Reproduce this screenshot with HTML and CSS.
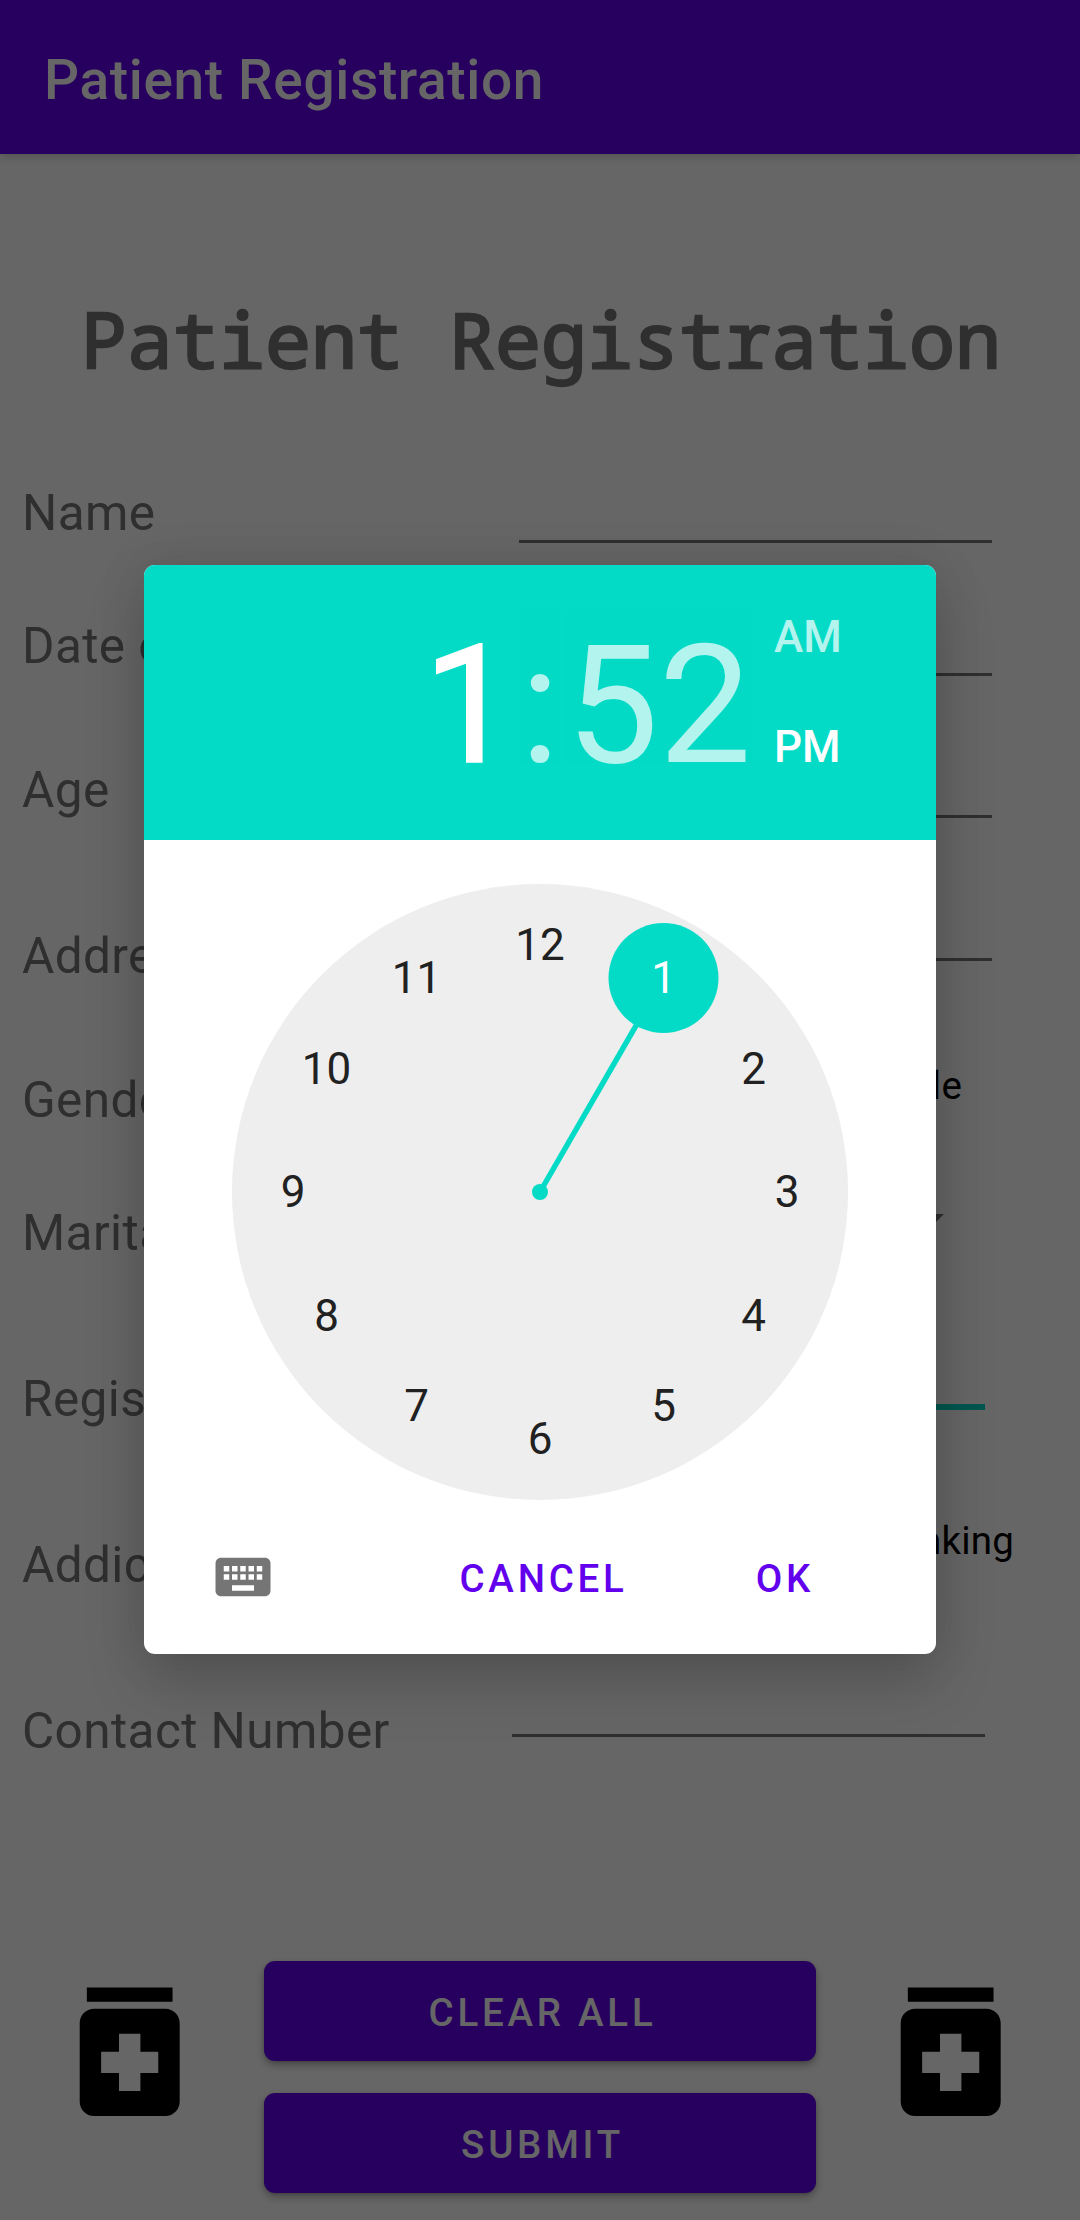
FILE: index.html
```html
<!DOCTYPE html>
<html lang="en">
<head>
<meta charset="utf-8">
<title>Patient Registration</title>
<link rel="stylesheet" href="styles.css">
</head>
<body>
<div class="screen">
  <header class="appbar">Patient Registration</header>
  <main class="content">
    <h1 class="heading">Patient Registration</h1>
    <form class="form">
      <div class="row row-name"><label>Name</label><span class="line"></span></div>
      <div class="row row-date"><label>Date of Birth</label><span class="line"></span></div>
      <div class="row row-age"><label>Age</label><span class="line"></span></div>
      <div class="row row-address"><label>Address</label><span class="line"></span></div>
      <div class="row row-gender"><label>Gender</label><span class="choice">Female</span></div>
      <div class="row row-marital"><label>Marital</label><span class="caret"></span></div>
      <div class="row row-time"><label>Registration</label><span class="line line-active"></span></div>
      <div class="row row-addiction"><label>Addiction</label><span class="choice">Drinking</span></div>
      <div class="row row-contact"><label>Contact Number</label><span class="line"></span></div>
    </form>
    <div class="actions">
      <svg class="medicine" viewBox="0 0 24 24"><path d="M6 3h12v2H6zM17 6H7c-1.100 0-2 .9-2 2v11c0 1.100.9 2 2 2h10c1.100 0 2-.9 2-2V8c0-1.100-.9-2-2-2zm-1 9h-2.500v2.500h-3V15H8v-3h2.500V9.500h3V12H16z"/></svg>
      <div class="buttons">
        <button class="button" type="button">CLEAR ALL</button>
        <button class="button" type="button">SUBMIT</button>
      </div>
      <svg class="medicine" viewBox="0 0 24 24"><path d="M6 3h12v2H6zM17 6H7c-1.100 0-2 .9-2 2v11c0 1.100.9 2 2 2h10c1.100 0 2-.9 2-2V8c0-1.100-.9-2-2-2zm-1 9h-2.500v2.500h-3V15H8v-3h2.500V9.500h3V12H16z"/></svg>
    </div>
  </main>
  <div class="scrim">
    <section class="dialog">
      <div class="time-header">
        <div class="time"><span class="hour">1</span><span class="colon">:</span><span class="minute">52</span></div>
        <div class="period"><span class="am">AM</span><span class="pm">PM</span></div>
      </div>
      <svg class="clock" viewBox="-308 -308 616 616">
        <circle class="face" r="308"/>
        <line class="hand" x1="0" y1="0" x2="123.500" y2="-214"/>
        <circle class="accent" r="8"/>
        <circle class="accent" cx="123.500" cy="-214" r="55"/>
        <g class="numbers">
          <text x="0" y="-232">12</text>
          <text class="selected" x="123.500" y="-199">1</text>
          <text x="213.500" y="-108">2</text>
          <text x="247" y="15">3</text>
          <text x="213.500" y="139">4</text>
          <text x="123.500" y="229">5</text>
          <text x="0" y="262">6</text>
          <text x="-123.500" y="229">7</text>
          <text x="-213.500" y="139">8</text>
          <text x="-247" y="15">9</text>
          <text x="-213.500" y="-108">10</text>
          <text x="-123.500" y="-199">11</text>
        </g>
      </svg>
      <div class="dialog-actions">
        <svg class="keyboard" viewBox="0 0 24 24"><path d="M20 5H4c-1.100 0-1.990.9-1.990 2L2 17c0 1.100.9 2 2 2h16c1.100 0 2-.9 2-2V7c0-1.100-.9-2-2-2zm-9 3h2v2h-2V8zm0 3h2v2h-2v-2zM8 8h2v2H8V8zm0 3h2v2H8v-2zm-1 2H5v-2h2v2zm0-3H5V8h2v2zm9 7H8v-2h8v2zm0-4h-2v-2h2v2zm0-3h-2V8h2v2zm3 3h-2v-2h2v2zm0-3h-2V8h2v2z"/></svg>
        <span class="text-button cancel">CANCEL</span>
        <span class="text-button">OK</span>
      </div>
    </section>
  </div>
</div>
</body>
</html>
```

FILE: styles.css
```css
* { box-sizing: border-box; }
body { margin: 0; font-family: Roboto, "Liberation Sans", sans-serif; }

.screen {
  position: relative;
  width: 1080px;
  height: 2220px;
  overflow: hidden;
  background: #fff;
  display: flex;
  flex-direction: column;
}

.appbar {
  height: 154px;
  padding: 0 44px;
  background: #6200ee;
  color: #fff;
  font-size: 55px;
  font-weight: 500;
  line-height: 160px;
  letter-spacing: .65px;
  box-shadow: 0 3px 9px rgba(0, 0, 0, .2);
}

.content { flex: 1; display: flex; flex-direction: column; }

.heading {
  margin: 139px 0 101px;
  padding-left: 2px;
  font-family: "Droid Sans Mono", "Noto Sans Mono", "DejaVu Sans Mono", monospace;
  font-size: 76.7px;
  font-weight: 400;
  line-height: 90px;
  text-align: center;
  white-space: nowrap;
  color: #757575;
  -webkit-text-stroke: 2.4px #757575;
}

.form { display: flex; flex-direction: column; }
.row {
  display: flex;
  justify-content: space-between;
  align-items: flex-start;
  padding: 0 88px 0 22px;
  height: 166px;
}
.row label {
  font-size: 49.5px;
  line-height: 58px;
  letter-spacing: .4px;
  color: #757575;
  white-space: nowrap;
}
.line { width: 473px; height: 3px; background: #757575; }
.line-active { height: 5.5px; background: #03dac5; }
.choice { font-size: 38.5px; line-height: 46px; letter-spacing: .2px; color: #000; }
.caret {
  border: 14px solid transparent;
  border-top-color: #757575;
  border-bottom: 0;
}

.row-name { height: 133px; }
.row-name .line { margin-top: 56px; }
.row-date { height: 144px; }
.row-date .line { margin-top: 56px; }
.row-age .line { margin-top: 54px; }
.row-address { height: 144px; }
.row-address .line { margin-top: 31px; }
.row-gender { height: 133px; padding-right: 118px; }
.row-gender .choice { margin-top: -8px; }
.row-marital { padding-right: 136px; }
.row-marital .caret { margin-top: 10px; }
.row-time { padding-right: 95px; }
.row-time .line { margin-top: 34px; }
.row-addiction { padding-right: 66px; }
.row-addiction .choice { margin-top: -18px; }
.row-contact { height: 259px; padding-right: 95px; }
.row-contact .line { margin-top: 32px; }

.actions {
  display: flex;
  justify-content: space-between;
  align-items: flex-start;
  padding: 0 44px;
}
.medicine { width: 171.4px; height: 171.4px; margin-top: 4.6px; }
.buttons { display: flex; flex-direction: column; gap: 32px; }
.button {
  width: 552px;
  height: 100px;
  padding: 2px 0 0 5px;
  border: 0;
  border-radius: 11px;
  background: #6200ee;
  color: #fff;
  font: 500 38.5px Roboto, "Liberation Sans", sans-serif;
  letter-spacing: 3.75px;
  box-shadow: 0 4px 8px rgba(0, 0, 0, .3), 0 1px 3px rgba(0, 0, 0, .15);
}

.scrim {
  position: absolute;
  inset: 0;
  padding: 565px 144px;
  background: rgba(0, 0, 0, .6);
}

.dialog {
  width: 792px;
  height: 1089px;
  border-radius: 11px;
  overflow: hidden;
  background: #fff;
  display: flex;
  flex-direction: column;
  align-items: center;
  box-shadow: 0 30px 60px rgba(0, 0, 0, .17), 0 0 50px rgba(0, 0, 0, .1);
}

.time-header {
  align-self: stretch;
  height: 275px;
  padding-left: 279px;
  background: #04dbc7;
  color: #fff;
  display: flex;
  align-items: flex-start;
}
.time {
  display: flex;
  width: 351px;
  font-size: 165px;
  line-height: 194px;
  padding-top: 44px;
}
.hour { width: 91px; -webkit-text-stroke: 1.6px #fff; }
.colon { width: 52px; text-align: center; }
.colon, .minute, .am { opacity: .7; }
.period {
  display: flex;
  flex-direction: column;
  gap: 58px;
  padding-top: 46px;
  font-size: 44px;
  font-weight: 500;
  line-height: 52px;
}

.clock { width: 616px; height: 616px; margin-top: 44px; }
.face { fill: #eee; }
.accent { fill: #04dbc7; }
.hand { stroke: #04dbc7; stroke-width: 5.5; }
.numbers { font-size: 44px; text-anchor: middle; fill: #212121; }
.numbers .selected { fill: #fff; }

.dialog-actions {
  align-self: stretch;
  display: flex;
  align-items: center;
  height: 66px;
  margin-top: 44px;
  padding: 0 122px 0 66px;
}
.keyboard { width: 66px; height: 66px; fill: #757575; }
.text-button {
  font-size: 38.5px;
  font-weight: 500;
  line-height: 46px;
  letter-spacing: 3.75px;
  color: #6200ee;
  padding-top: 3px;
}
.cancel { margin-left: auto; margin-right: 128px; }
```
